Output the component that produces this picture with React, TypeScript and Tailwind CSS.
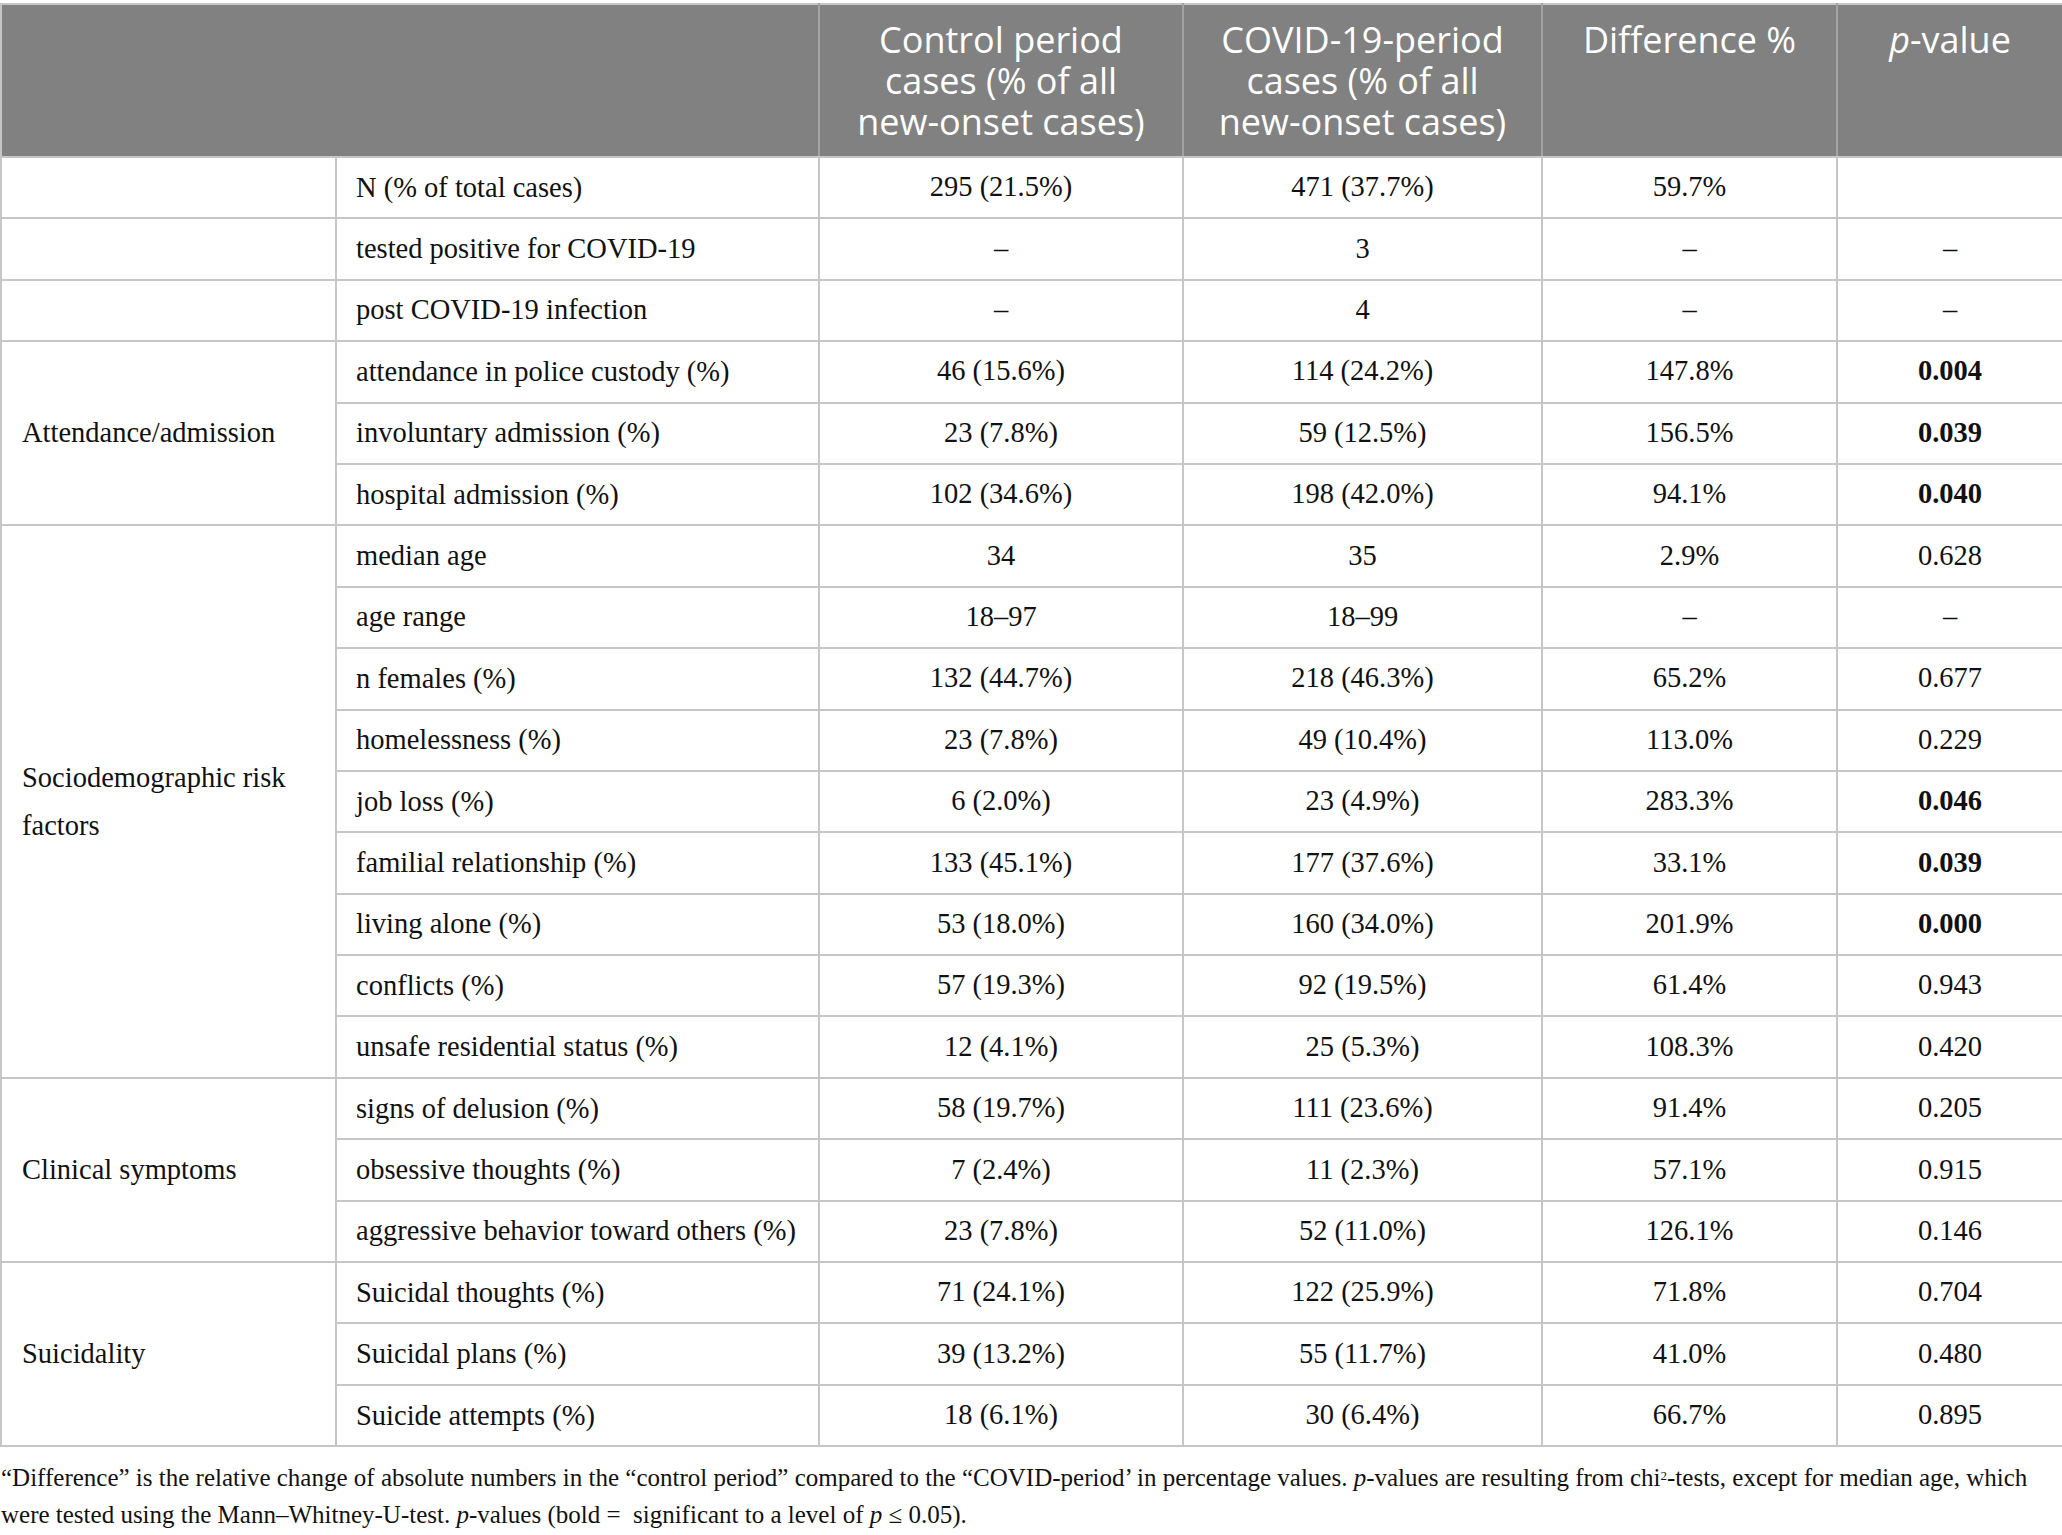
import React from "react";

type Row = { label: string; c: string; v: string; d: string; p: string; bold?: boolean };

const rows: Row[] = [
  { label: "N (% of total cases)", c: "295 (21.5%)", v: "471 (37.7%)", d: "59.7%", p: "" },
  { label: "tested positive for COVID-19", c: "–", v: "3", d: "–", p: "–" },
  { label: "post COVID-19 infection", c: "–", v: "4", d: "–", p: "–" },
  { label: "attendance in police custody (%)", c: "46 (15.6%)", v: "114 (24.2%)", d: "147.8%", p: "0.004", bold: true },
  { label: "involuntary admission (%)", c: "23 (7.8%)", v: "59 (12.5%)", d: "156.5%", p: "0.039", bold: true },
  { label: "hospital admission (%)", c: "102 (34.6%)", v: "198 (42.0%)", d: "94.1%", p: "0.040", bold: true },
  { label: "median age", c: "34", v: "35", d: "2.9%", p: "0.628" },
  { label: "age range", c: "18–97", v: "18–99", d: "–", p: "–" },
  { label: "n females (%)", c: "132 (44.7%)", v: "218 (46.3%)", d: "65.2%", p: "0.677" },
  { label: "homelessness (%)", c: "23 (7.8%)", v: "49 (10.4%)", d: "113.0%", p: "0.229" },
  { label: "job loss (%)", c: "6 (2.0%)", v: "23 (4.9%)", d: "283.3%", p: "0.046", bold: true },
  { label: "familial relationship (%)", c: "133 (45.1%)", v: "177 (37.6%)", d: "33.1%", p: "0.039", bold: true },
  { label: "living alone (%)", c: "53 (18.0%)", v: "160 (34.0%)", d: "201.9%", p: "0.000", bold: true },
  { label: "conflicts (%)", c: "57 (19.3%)", v: "92 (19.5%)", d: "61.4%", p: "0.943" },
  { label: "unsafe residential status (%)", c: "12 (4.1%)", v: "25 (5.3%)", d: "108.3%", p: "0.420" },
  { label: "signs of delusion (%)", c: "58 (19.7%)", v: "111 (23.6%)", d: "91.4%", p: "0.205" },
  { label: "obsessive thoughts (%)", c: "7 (2.4%)", v: "11 (2.3%)", d: "57.1%", p: "0.915" },
  { label: "aggressive behavior toward others (%)", c: "23 (7.8%)", v: "52 (11.0%)", d: "126.1%", p: "0.146" },
  { label: "Suicidal thoughts (%)", c: "71 (24.1%)", v: "122 (25.9%)", d: "71.8%", p: "0.704" },
  { label: "Suicidal plans (%)", c: "39 (13.2%)", v: "55 (11.7%)", d: "41.0%", p: "0.480" },
  { label: "Suicide attempts (%)", c: "18 (6.1%)", v: "30 (6.4%)", d: "66.7%", p: "0.895" },
];

const groups: Record<number, [string, number]> = {
  0: ["", 1],
  1: ["", 1],
  2: ["", 1],
  3: ["Attendance/admission", 3],
  6: ["Sociodemographic risk factors", 9],
  15: ["Clinical symptoms", 3],
  18: ["Suicidality", 3],
};

const cell = "border-2 border-[#c6c6c6] align-middle";

function Lines({ lines }: { lines: string[] }) {
  return (
    <div className="flex flex-col items-center">
      {lines.map((l, i) => (
        <span key={i} className="whitespace-nowrap block">
          {l}
        </span>
      ))}
    </div>
  );
}

export default function App() {
  return (
    <div className="bg-white w-[2062px] min-h-[1535px] pt-[3px]" style={{ fontFamily: '"Liberation Serif", serif' }}>
      <table className="border-collapse table-fixed w-[2062px] text-[#111111] text-[28.5px]">
        <colgroup>
          <col className="w-[335px]" />
          <col className="w-[483px]" />
          <col className="w-[364px]" />
          <col className="w-[359px]" />
          <col className="w-[295px]" />
          <col className="w-[226px]" />
        </colgroup>
        <thead>
          <tr className="h-[153px] bg-[#808180] text-white text-[36px] leading-[41px]" style={{ fontFamily: '"Open Sans", sans-serif' }}>
            <th colSpan={2} className="border-2 border-[#c6c6c6] border-r-[#a3a3a3] font-normal"></th>
            <th className="border-2 border-[#c6c6c6] border-x-[#a3a3a3] font-normal align-top pt-[14px] px-1">
              <Lines lines={["Control period", "cases (% of all", "new-onset cases)"]} />
            </th>
            <th className="border-2 border-[#c6c6c6] border-x-[#a3a3a3] font-normal align-top pt-[14px] px-1">
              <Lines lines={["COVID-19-period", "cases (% of all", "new-onset cases)"]} />
            </th>
            <th className="border-2 border-[#c6c6c6] border-x-[#a3a3a3] font-normal align-top pt-[14px] px-1">
              Difference %
            </th>
            <th className="border-2 border-[#c6c6c6] border-l-[#a3a3a3] font-normal align-top pt-[14px] px-1">
              <span className="italic">p</span>-value
            </th>
          </tr>
        </thead>
        <tbody>
          {rows.map((r, i) => (
            <tr key={i} className="h-[61.4px]">
              {groups[i] !== undefined && (
                <td rowSpan={groups[i][1]} className={`${cell} pl-[20px] pr-3 text-left leading-[48px]`}>
                  {groups[i][0]}
                </td>
              )}
              <td className={`${cell} pl-[19px] text-left leading-[32px]`}>{r.label}</td>
              <td className={`${cell} text-center`}>{r.c}</td>
              <td className={`${cell} text-center`}>{r.v}</td>
              <td className={`${cell} text-center`}>{r.d}</td>
              <td className={`${cell} text-center ${r.bold ? "font-bold" : ""}`}>{r.p}</td>
            </tr>
          ))}
        </tbody>
      </table>
      <div className="text-[25px] leading-[37px] text-[#111111] pl-[1px] pt-[12px] w-[2040px]">
        “Difference” is the relative change of absolute numbers in the “control period” compared to the “COVID-period’ in percentage values. <span className="italic">p</span>-values are resulting from chi<sup className="text-[13px] leading-none">2</sup>-tests, except for median age, which were tested using the Mann–Whitney-U-test. <span className="italic">p</span>-values (bold =&nbsp; significant to a level of <span className="italic">p</span>&nbsp;≤&nbsp;0.05).
      </div>
    </div>
  );
}
